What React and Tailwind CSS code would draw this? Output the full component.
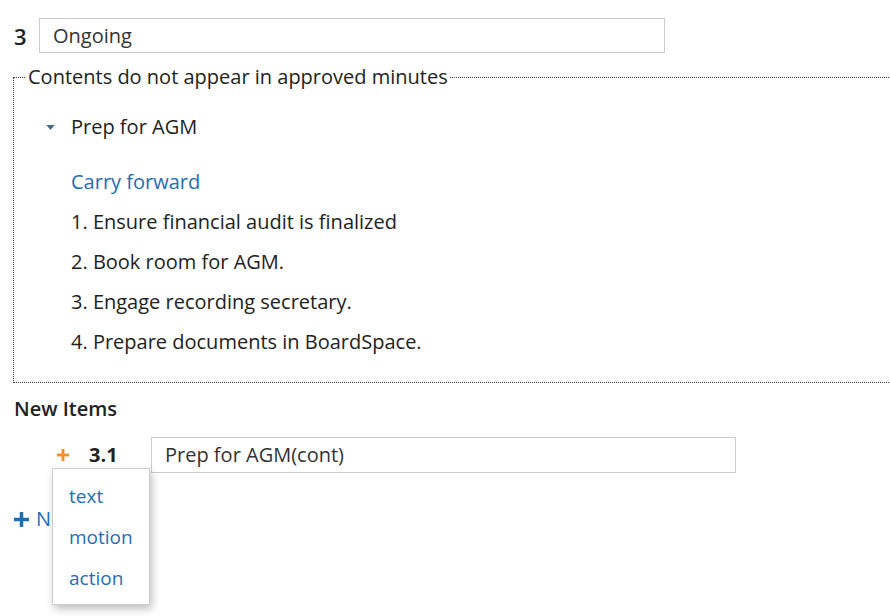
import { useState } from 'react';

const font = { fontFamily: '"Open Sans", "Noto Sans", sans-serif' };

// Cruz sólida usada para los botones de agregar
function PlusIcon({ className }) {
  return (
    <svg viewBox="0 0 12 12" className={className} fill="currentColor">
      <rect x="4.6" y="0" width="2.8" height="12" />
      <rect x="0" y="4.6" width="12" height="2.8" />
    </svg>
  );
}

export default function App() {
  const [items] = useState([
    '1. Ensure financial audit is finalized',
    '2. Book room for AGM.',
    '3. Engage recording secretary.',
    '4. Prepare documents in BoardSpace.',
  ]);

  return (
    <div className="w-[890px] h-[616px] overflow-hidden bg-white text-[#222] text-[20px]" style={font}>
      {/* Encabezado del punto 3 */}
      <div className="flex items-center pt-[18px] pl-[14px]">
        <span className="w-[25px] text-[22px] font-semibold leading-none">3</span>
        <div className="w-[626px] h-[35px] border border-[#ccc] flex items-center pl-[13px] text-[#333]">
          Ongoing
        </div>
      </div>

      {/* Contenido que no aparece en las actas aprobadas */}
      <fieldset className="mt-[11px] ml-[13px] w-[890px] h-[319px] border border-dotted border-[#444]">
        <legend className="ml-[12px] px-[2px] leading-[26px]">
          Contents do not appear in approved minutes
        </legend>
        <div className="flex items-center h-[26px] mt-[24px] pl-[32px]">
          <svg viewBox="0 0 10 6" className="w-[9px] h-[5px] text-[#446a85]" fill="currentColor">
            <polygon points="0,0 10,0 5,6" />
          </svg>
          <span className="ml-[16px]">Prep for AGM</span>
        </div>
        <div className="pl-[57px]">
          <div className="mt-[29px] text-[#1f6db3] leading-[26px]">Carry forward</div>
          <div className="flex flex-col gap-[14px] mt-[14px]">
            {items.map((item) => (
              <div key={item} className="leading-[26px]">{item}</div>
            ))}
          </div>
        </div>
      </fieldset>

      {/* Nuevos puntos */}
      <div className="pl-[14px] mt-[13px] font-semibold leading-[26px]">New Items</div>
      <div className="relative">
        <div className="flex items-center mt-[15px] pl-[57px]">
          <PlusIcon className="w-[12px] h-[12px] text-[#f39020]" />
          <span className="ml-[20px] w-[62px] font-bold">3.1</span>
          <div className="w-[585px] h-[36px] border border-[#ccc] flex items-center pl-[13px] text-[#333]">
            Prep for AGM(cont)
          </div>
        </div>
        <div className="flex items-center mt-[31px] pl-[14px] text-[#1f6db3]">
          <PlusIcon className="w-[15px] h-[15px] text-[#1f6db3]" />
          <span className="ml-[7px]">New Item</span>
        </div>

        {/* Menú desplegable */}
        <div className="absolute left-[52px] top-[31px] w-[98px] h-[137px] bg-white border border-[#ccc] shadow-[2px_4px_8px_rgba(0,0,0,0.25)] flex flex-col pt-[14px] pl-[16px] gap-[15px] text-[19px] text-[#1f6db3]">
          <span className="leading-[26px]">text</span>
          <span className="leading-[26px]">motion</span>
          <span className="leading-[26px]">action</span>
        </div>
      </div>
    </div>
  );
}
